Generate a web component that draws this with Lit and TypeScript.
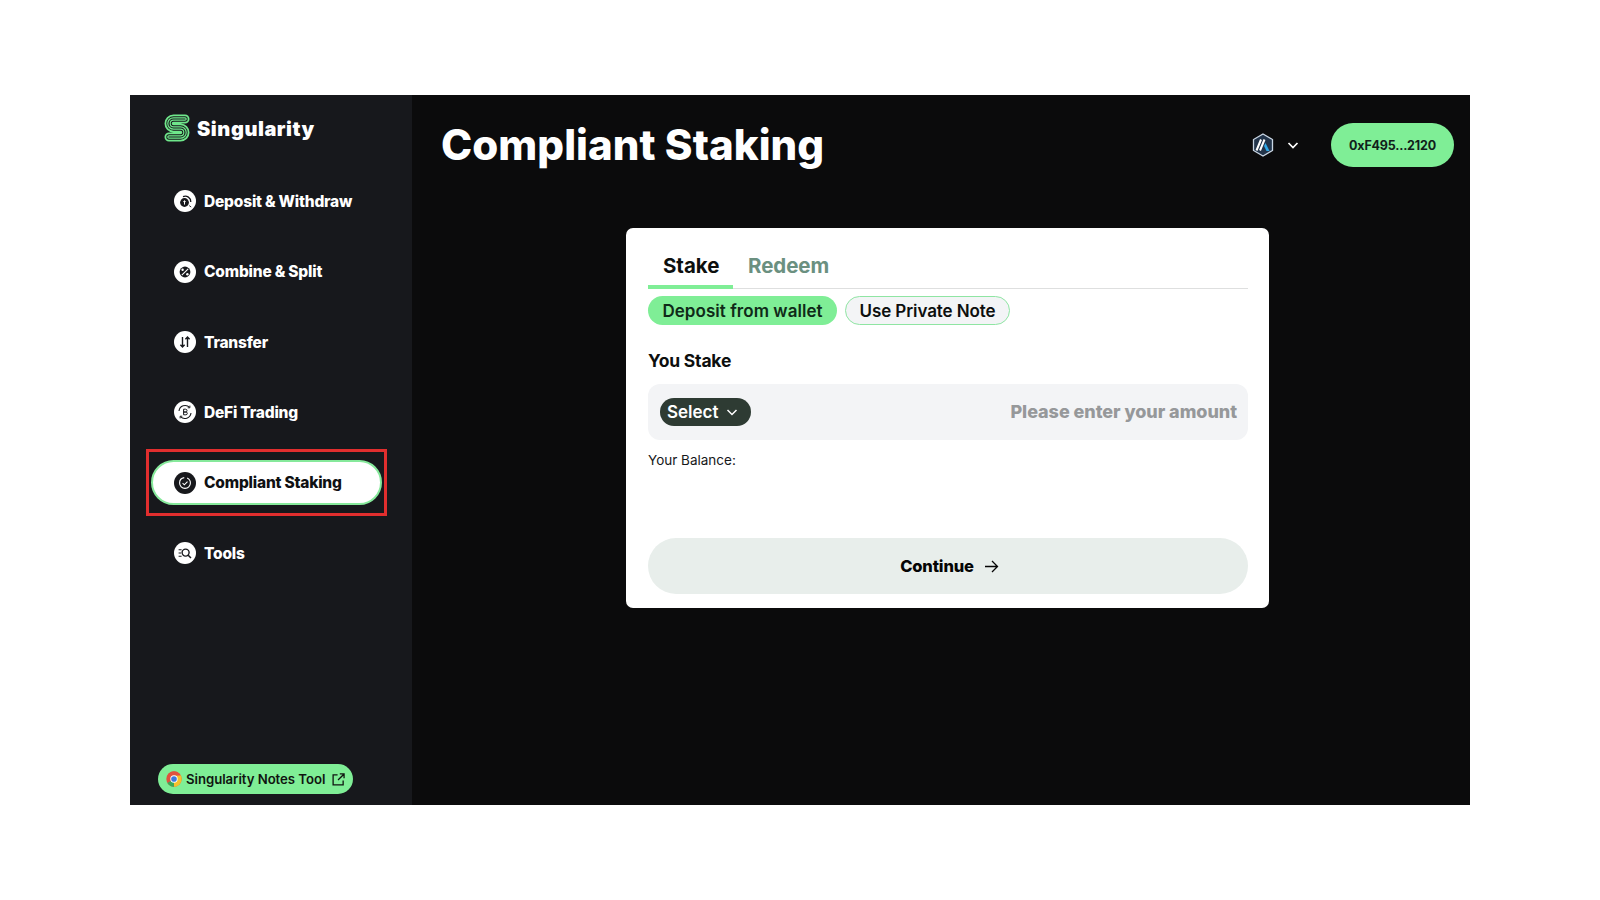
import { LitElement, html, css, svg } from "lit";
import { customElement } from "lit/decorators.js";

const navIcons: Record<string, unknown> = {
  deposit: svg`<circle cx="10.500" cy="12.500" r="4.400" fill="#17181c"/><path d="M10.500 10.400v4.200M9.300 11.600h2.400" stroke="#fff" stroke-width="1"/><path d="M9 6.600a5.600 5.600 0 0 1 7.800 5.400" fill="none" stroke="#17181c" stroke-width="1.300"/><path d="M15.200 15.600l2 1.400" stroke="#17181c" stroke-width=".9"/>`,
  combine: svg`<rect x="5.600" y="5.600" width="10.800" height="10.800" rx="5.400" fill="#17181c"/><path d="M14.200 7.800l-6.400 6.400" stroke="#fff" stroke-width="1.100"/><circle cx="8.600" cy="8.800" r="1.200" fill="#fff"/><circle cx="13.400" cy="13.200" r="1.200" fill="#fff"/>`,
  transfer: svg`<path d="M8.500 6v10M6.400 13.800l2.100 2.200 2.100-2.200M13.500 16V6M11.400 8.200L13.500 6l2.100 2.200" fill="none" stroke="#17181c" stroke-width="1.400"/>`,
  defi: svg`<path d="M5 10a6.200 6.200 0 0 1 10.600-3.600M17 12a6.200 6.200 0 0 1-10.600 3.600" fill="none" stroke="#17181c" stroke-width="1.100"/><path d="M15.900 4.600v2.200h-2.200M6.100 17.400v-2.200h2.200" fill="none" stroke="#17181c" stroke-width=".9"/><path d="M9.600 8.200v5.600M9.600 8.200h2a1.400 1.400 0 0 1 0 2.800h-2h2.300a1.400 1.400 0 0 1 0 2.800H9.600" fill="none" stroke="#17181c" stroke-width="1"/>`,
  staking: svg`<circle cx="11" cy="11" r="5.400" fill="none" stroke="#fff" stroke-width="1.100" stroke-dasharray="24 3"/><path d="M8.600 11.200l1.700 1.600 3.200-3.200" fill="none" stroke="#fff" stroke-width="1.100"/>`,
  tools: svg`<path d="M4.600 7.800h3M4.600 11h2.400M4.600 14.200h3" stroke="#17181c" stroke-width="1.100"/><circle cx="11.600" cy="10.600" r="3.500" fill="none" stroke="#17181c" stroke-width="1.400"/><path d="M14.200 13.200l2.800 2.800" stroke="#17181c" stroke-width="1.500"/>`,
};

const items = [
  { label: "Deposit & Withdraw", icon: "deposit" },
  { label: "Combine & Split", icon: "combine" },
  { label: "Transfer", icon: "transfer" },
  { label: "DeFi Trading", icon: "defi" },
  { label: "Compliant Staking", icon: "staking", active: true },
  { label: "Tools", icon: "tools" },
];

const sPath = "M21 5H9.500C6.800 5 5 7 5 9.500S6.800 14 9.500 14h7C19.200 14 21 16 21 18.500S19.200 23 16.500 23H5";

@customElement("app-root")
export class AppRoot extends LitElement {
  static styles = css`
    :host { display: block; min-height: 900px; background: #fff; padding: 95px 130px; box-sizing: border-box; font-family: Inter, "Liberation Sans", sans-serif; }
    .frame { display: flex; width: 1340px; height: 710px; background: #0b0b0c; color: #fff; }
    .side { width: 282px; flex: none; box-sizing: border-box; background: #17181c; padding: 19px 30px 11px 21px; display: flex; flex-direction: column; }
    .brand { display: flex; align-items: center; height: 28px; margin-left: 13px; gap: 7px; font-weight: 900; font-size: 20px; letter-spacing: 0.55px; }
    .brand span { padding-top: 2px; }
    .logo { width: 26px; height: 28px; flex: none; }
    .nav { display: flex; flex-direction: column; gap: 25.4px; margin-top: 36.8px; }
    .item { position: relative; height: 45px; box-sizing: border-box; border: 2px solid transparent; border-radius: 23px; padding-left: 21px; display: flex; align-items: center; gap: 8px; font-size: 15.500px; font-weight: 800; letter-spacing: -0.2px; }
    .item.active { background: #fff; border-color: #86e99b; color: #101113; }
    .item.active::after { content: ""; position: absolute; inset: -13px -7px -13px -7px; border: 3px solid #e12e2e; pointer-events: none; }
    .ic { width: 22px; height: 22px; flex: none; border-radius: 50%; background: #fff; display: block; }
    .item.active .ic { background: #17181c; }
    .notes { margin-top: auto; margin-left: 7px; width: 195px; height: 30px; box-sizing: border-box; border-radius: 15px; background: #7fee96; color: #101510; display: flex; align-items: center; padding-left: 8px; gap: 4px; font-size: 13.200px; font-weight: 600; letter-spacing: -0.05px; white-space: nowrap; }
    .notes .chrome { width: 16px; height: 16px; flex: none; }
    .notes .ext { width: 13px; height: 13px; flex: none; margin-left: 3px; }
    .main { flex: 1; min-width: 0; display: flex; flex-direction: column; }
    .top { display: flex; align-items: center; height: 44px; margin-top: 28px; padding: 0 16px 0 29px; }
    h1 { margin: -2px 0 0; font-size: 42px; font-weight: 800; letter-spacing: 0.05px; flex: 1; white-space: nowrap; }
    .net { width: 22px; height: 24px; flex: none; }
    .chev { width: 14px; height: 14px; flex: none; margin: 0 31px 0 12px; }
    .wallet { width: 123px; height: 44px; border-radius: 22px; background: #7fee96; color: #10201a; display: flex; align-items: center; justify-content: center; font-size: 12.500px; font-weight: 700; letter-spacing: -0.2px; flex: none; }
    .card { width: 643px; height: 380px; box-sizing: border-box; margin: 61px 0 0 214px; background: #fff; border-radius: 7px; padding: 22px 21px 14px 22px; color: #0d0f0e; display: flex; flex-direction: column; }
    .tabs { display: flex; height: 38px; border-bottom: 1px solid #dedfdf; box-sizing: content-box; }
    .tab { padding: 0 15px 8px; height: 38px; box-sizing: border-box; display: flex; align-items: center; font-size: 20.500px; font-weight: 700; letter-spacing: -0.05px; }
    .tab.on { border-bottom: 4px solid #7fee96; padding-bottom: 5px; margin-bottom: -1px; height: 39px; width: 85px; }
    .tab.off { color: #6b9080; }
    .modes { display: flex; gap: 8px; margin-top: 7px; }
    .mode { height: 29px; box-sizing: border-box; border-radius: 15px; display: flex; align-items: center; justify-content: center; font-size: 17px; font-weight: 600; letter-spacing: 0.05px; white-space: nowrap; }
    .mode.a { width: 189px; background: #7fee96; color: #0f2a18; }
    .mode.b { width: 165px; background: #f3f4f6; border: 1px solid #8fe5a3; letter-spacing: -0.1px; }
    .lab { margin-top: 26px; height: 19px; line-height: 19px; font-size: 17.500px; font-weight: 700; letter-spacing: -0.2px; }
    .field { margin-top: 14px; height: 56px; width: 600px; background: #f3f4f6; border-radius: 12px; display: flex; align-items: center; justify-content: space-between; padding: 0 11px 0 12px; box-sizing: border-box; }
    .sel { width: 91px; height: 28px; box-sizing: border-box; border-radius: 14px; background: #2e3b33; color: #fff; display: flex; align-items: center; padding-left: 7px; gap: 6px; font-size: 17px; font-weight: 600; }
    .sel svg { width: 14px; height: 14px; }
    .ph { color: #96989a; font-size: 18px; font-weight: 800; letter-spacing: -0.05px; margin-top: -2px; }
    .bal { margin-top: 12px; height: 16px; line-height: 16px; font-size: 13.500px; font-weight: 400; color: #16181a; }
    .cont { margin-top: 70px; width: 600px; height: 56px; border-radius: 28px; background: #e8eeeb; color: #050505; display: flex; align-items: center; justify-content: center; gap: 10px; font-size: 16.500px; font-weight: 800; letter-spacing: -0.15px; padding-left: 3px; box-sizing: border-box; }
    .cont svg { width: 15px; height: 15px; }
  `;

  render() {
    return html`<div class="frame">
      <aside class="side">
        <div class="brand">
          <svg class="logo" viewBox="0 0 26 28" fill="none" stroke-linecap="round" stroke-linejoin="round">
            <path d=${sPath} stroke="#6fe78b" stroke-width="9"/>
            <path d=${sPath} stroke="#17181c" stroke-width="5.400"/>
            <path d=${sPath} stroke="#6fe78b" stroke-width="3.600"/>
            <path d=${sPath} stroke="#17181c" stroke-width="1.200"/>
          </svg>
          <span>Singularity</span>
        </div>
        <nav class="nav">
          ${items.map((i) => html`<div class="item ${i.active ? "active" : ""}">
            <svg class="ic" viewBox="0 0 22 22">${navIcons[i.icon]}</svg>
            <span>${i.label}</span>
          </div>`)}
        </nav>
        <div class="notes">
          <svg class="chrome" viewBox="0 0 48 48">
            <circle cx="24" cy="24" r="23" fill="#e0523f"/>
            <path d="M24 24L4 36A23 23 0 0 0 24 47L36 24Z" fill="#3aa757"/>
            <path d="M24 47A23 23 0 0 0 44 13H24Z" fill="#f6c02c"/>
            <path d="M24 14L44 13A23 23 0 0 0 4 13L14 30Z" fill="#e0523f"/>
            <circle cx="24" cy="24" r="11" fill="#fff"/>
            <circle cx="24" cy="24" r="8.500" fill="#3d78e0"/>
          </svg>
          <span>Singularity Notes Tool</span>
          <svg class="ext" viewBox="0 0 14 14" fill="none" stroke="#101510" stroke-width="1.400">
            <path d="M6 2H1.200v10.800H12V8M8.400 1H13v4.600M13 1L6.500 7.500"/>
          </svg>
        </div>
      </aside>
      <main class="main">
        <header class="top">
          <h1>Compliant Staking</h1>
          <svg class="net" viewBox="0 0 22 24">
            <path d="M11 1l9.500 5.500v11L11 23 1.500 17.500v-11z" fill="#22344a" stroke="#c9d6e4" stroke-width="1.300"/>
            <path d="M9 6.500L4.500 17.500M12.500 6.500L8 17.500" stroke="#fff" stroke-width="2" fill="none"/>
            <path d="M13.500 10l4 8h-3l-2.500-5z" fill="#2ea7e8"/>
          </svg>
          <svg class="chev" viewBox="0 0 14 14" fill="none" stroke="#fff" stroke-width="1.700"><path d="M2.500 5l4.500 4.500L11.500 5"/></svg>
          <div class="wallet">0xF495...2120</div>
        </header>
        <section class="card">
          <div class="tabs">
            <div class="tab on">Stake</div>
            <div class="tab off">Redeem</div>
          </div>
          <div class="modes">
            <div class="mode a">Deposit from wallet</div>
            <div class="mode b">Use Private Note</div>
          </div>
          <div class="lab">You Stake</div>
          <div class="field">
            <div class="sel">Select
              <svg viewBox="0 0 14 14" fill="none" stroke="#fff" stroke-width="1.500"><path d="M2.500 5l4.500 4.500L11.500 5"/></svg>
            </div>
            <div class="ph">Please enter your amount</div>
          </div>
          <div class="bal">Your Balance:</div>
          <div class="cont">Continue
            <svg viewBox="0 0 15 15" fill="none" stroke="#050505" stroke-width="1.300"><path d="M1 7.500h12.500M8 2l5.500 5.500L8 13"/></svg>
          </div>
        </section>
      </main>
    </div>`;
  }
}
